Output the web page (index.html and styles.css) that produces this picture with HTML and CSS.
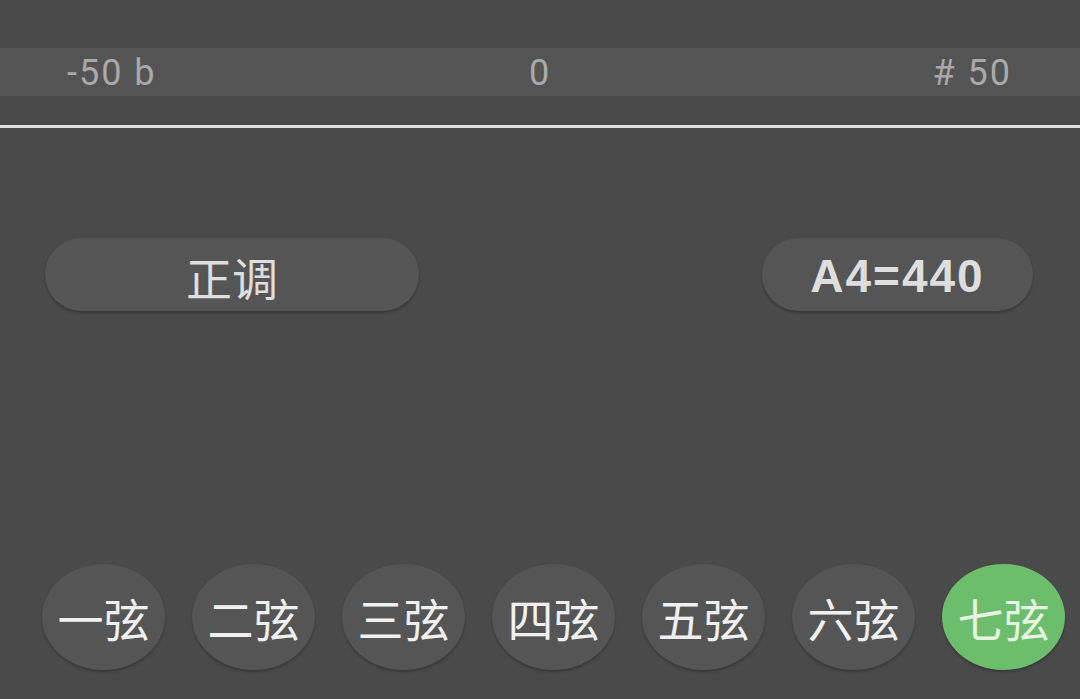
FILE: index.html
```html
<!DOCTYPE html>
<html lang="zh">
<head>
<meta charset="utf-8">
<link rel="stylesheet" href="styles.css">
</head>
<body>
<div class="app">
  <div class="top"></div>
  <div class="scale">
    <span class="lbl left">-50 b</span>
    <span class="lbl mid">0</span>
    <span class="lbl right"># 50</span>
  </div>
  <div class="line"></div>
  <div class="controls">
    <div class="pill mode">正调</div>
    <div class="pill pitch">A4=440</div>
  </div>
  <div class="strings">
    <div class="str">一弦</div>
    <div class="str">二弦</div>
    <div class="str">三弦</div>
    <div class="str">四弦</div>
    <div class="str">五弦</div>
    <div class="str">六弦</div>
    <div class="str active">七弦</div>
  </div>
</div>
</body>
</html>
```

FILE: styles.css
```css
html, body {
  margin: 0;
  padding: 0;
  background: #4a4a4a;
}
.app {
  width: 1080px;
  height: 699px;
  overflow: hidden;
  font-family: Roboto, "Noto Sans CJK SC", sans-serif;
}
.top {
  height: 48px;
}
.scale {
  height: 48px;
  background: #545454;
  position: relative;
}
.lbl {
  position: absolute;
  top: 3px;
  font-size: 36px;
  line-height: 44px;
  letter-spacing: 2px;
  color: #a9a9a9;
}
.left { left: 67px; }
.mid { left: 529px; }
.right { right: 68px; letter-spacing: 2px; }
.line {
  margin-top: 29px;
  height: 3px;
  background: #dcdcdc;
}
.controls {
  margin-top: 110px;
  display: flex;
  justify-content: space-between;
  padding: 0 47px 0 45px;
}
.pill {
  height: 73px;
  border-radius: 37px;
  background: #555555;
  box-shadow: 0 2px 3px rgba(0,0,0,0.25);
  display: flex;
  align-items: center;
  justify-content: center;
  color: #dedede;
}
.mode {
  width: 374px;
  font-size: 46px;
  font-family: "Noto Sans CJK SC", sans-serif;
  padding-top: 2px;
  box-sizing: border-box;
}
.pitch {
  width: 271px;
  font-size: 46px;
  font-weight: bold;
  letter-spacing: 2px;
  font-family: "Liberation Sans", Arial, sans-serif;
  padding-top: 2px;
  box-sizing: border-box;
}
.strings {
  margin-top: 253px;
  display: flex;
  gap: 27px;
  padding-left: 42px;
}
.str {
  width: 123px;
  height: 106px;
  border-radius: 50%;
  background: #555555;
  box-shadow: 0 2px 3px rgba(0,0,0,0.25);
  display: flex;
  align-items: center;
  justify-content: center;
  color: #f0f0f0;
  font-size: 46px;
  font-family: "Noto Sans CJK SC", sans-serif;
  flex-shrink: 0;
}
.str.active {
  background: #6cbd6c;
  color: #e6f4e4;
}
```
